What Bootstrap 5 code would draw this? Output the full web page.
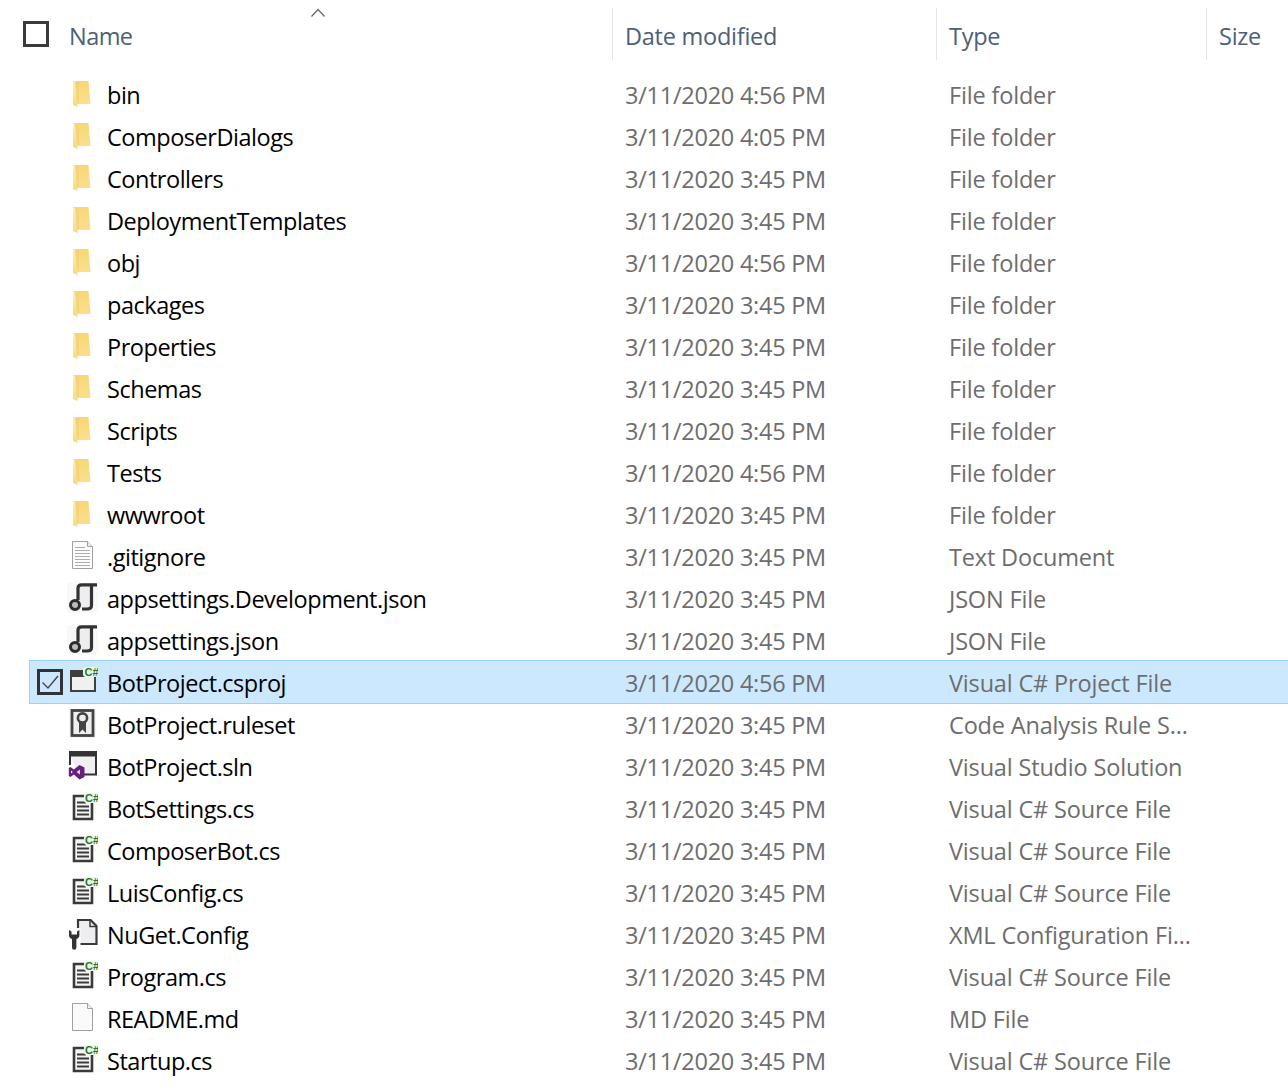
<!DOCTYPE html>
<html lang="en">
<head>
    <meta charset="UTF-8">
    <meta name="viewport" content="width=device-width, initial-scale=1">
    <link href="https://cdn.jsdelivr.net/npm/bootstrap@5.3.3/dist/css/bootstrap.min.css" rel="stylesheet">
    <title>Explorer</title>
    <style>
        body {
            font-family: "Open Sans", "Noto Sans", sans-serif;
            font-size: 23.5px;
            letter-spacing: -0.25px;
            background: #fff;
            overflow: hidden;
        }
        .defs-holder { width: 0; height: 0; display: block; }
        .head-row { height: 74px; position: relative; color: #4c607a; }
        .head-box { width: 26px; height: 26px; border: 3px solid #3a3a3a; margin: 21px 20px 0 23px; }
        .head-cell { height: 52px; margin-top: 8px; padding-top: 6px; display: flex; align-items: center; margin-bottom: 14px; }
        .head-name { width: 543px; letter-spacing: -0.55px; }
        .head-date { width: 324px; border-left: 1px solid #e5e5e5; padding-left: 12px; }
        .head-type { width: 270px; border-left: 1px solid #e5e5e5; padding-left: 12px; }
        .head-size { flex: 1; border-left: 1px solid #e5e5e5; padding-left: 12px; }
        .sort-caret { position: absolute; left: 310px; top: 8px; }
        .file-row { height: 42px; margin-left: 29px; color: #000; }
        .file-row.picked {
            height: 44px;
            margin-top: -2px;
            padding-top: 2px;
            background: #cce8ff;
            border: 1px solid #99d1ff;
            border-right: 0;
        }
        .file-row.picked .name-cell { width: 595px; }
        .picked-box { width: 26px; height: 26px; border: 3px solid #333; margin: -3px 3px 0 7px; }
        .box-gap { width: 37px; flex: none; }
        .name-cell { width: 596px; }
        .name-txt { padding-top: 2px; letter-spacing: -0.47px; }
        .date-cell { width: 324px; color: #6d6d6d; padding-top: 2px; }
        .type-cell { color: #6d6d6d; padding-top: 2px; letter-spacing: -0.17px; }
        .file-ico { width: 32px; height: 32px; flex: none; margin-right: 9px; }
        .badge-txt { font-family: "Liberation Sans", sans-serif; font-weight: 700; font-size: 11px; fill: #1f7a24; letter-spacing: 0; }
    </style>
</head>
<body>
    <svg class="defs-holder" aria-hidden="true">
        <defs>
            <linearGradient id="folderBack" x1="0" y1="0" x2="0" y2="1">
                <stop offset="0" stop-color="#f8d775"/>
                <stop offset="1" stop-color="#fbdf8d"/>
            </linearGradient>
            <linearGradient id="folderFront" x1="0" y1="0" x2="0" y2="1">
                <stop offset="0" stop-color="#fff0b8"/>
                <stop offset="1" stop-color="#f9d97f"/>
            </linearGradient>
            <symbol id="ico-folder" viewBox="0 0 32 32">
                <path d="M7 2H22.500L24.500 25H11z" fill="url(#folderBack)"/>
                <path d="M7 2L11.500 4.500V28L7 26z" fill="url(#folderFront)"/>
                <path d="M9 3L13 3V24H11z" fill="#f6d27a"/>
            </symbol>
            <symbol id="ico-text" viewBox="0 0 32 32">
                <path d="M6.500 .5H21.500L26.500 5.500V27.500H6.500z" fill="#fdfdfd" stroke="#a0a0a0"/>
                <path d="M21.500 .5V5.500H26.500" fill="#eee" stroke="#a0a0a0"/>
                <path d="M9 6.500H19M9 9.500H24M9 12.500H24M9 15.500H24M9 18.500H24M9 21.500H24M9 24.500H24" stroke="#adadad"/>
            </symbol>
            <symbol id="ico-json" viewBox="0 0 32 32">
                <rect x="1" y="0" width="31" height="30" rx="4" fill="#f8f8f8"/>
                <path d="M13 3H25V24L18 26H13z" fill="#eeeef0"/>
                <path d="M12 17V5Q12 1.800 15.500 1.800H31" fill="none" stroke="#333" stroke-width="3.200"/>
                <path d="M25.500 2V22.500Q25.500 26 21 26H16" fill="none" stroke="#333" stroke-width="3.200"/>
                <circle cx="9" cy="22" r="4.500" fill="#bbb" stroke="#2c2c2c" stroke-width="3"/>
            </symbol>
            <symbol id="ico-proj" viewBox="0 0 32 32">
                <rect x="5" y="4" width="24" height="20" fill="#f0f0f0" stroke="#3f3f3f" stroke-width="2"/>
                <rect x="5" y="4" width="24" height="6" fill="#3f3f3f"/>
                <rect x="17" y="0" width="15" height="10" rx="3" fill="#eef6ee"/>
                <text class="badge-txt" x="18.500" y="8.500">C#</text>
            </symbol>
            <symbol id="ico-rule" viewBox="0 0 32 32">
                <rect x="3" y="0" width="27" height="29" fill="#f5f5f5"/>
                <rect x="6" y="1.500" width="21" height="25" fill="#efeff1" stroke="#444" stroke-width="2.800"/>
                <path d="M13 13V24L16.500 20.500L20 24V13z" fill="#444"/>
                <circle cx="16.500" cy="9" r="4.600" fill="#efeff1" stroke="#444" stroke-width="2.600"/>
            </symbol>
            <symbol id="ico-sln" viewBox="0 0 32 32">
                <path d="M4 5H30V23H13z" fill="#f0f0f2"/>
                <rect x="3" y="0" width="28" height="5.500" fill="#333"/>
                <path d="M30 5V23.500H15M4 5V14" fill="none" stroke="#333" stroke-width="2"/>
                <path d="M13.500 14L18.500 16.500V26L13.500 28.500L7.800 23.500L4.500 26L2.800 25V17L4.500 16L7.800 18.500zM13.800 18.500L10.800 21L13.800 23.500zM5 19.500V22.500L6.800 21z" fill="#68217a" fill-rule="evenodd"/>
            </symbol>
            <symbol id="ico-cs" viewBox="0 0 32 32">
                <path d="M8 3H21L26 8V26H8z" fill="#f4f4f4" stroke="#3a3a3a" stroke-width="2.600"/>
                <path d="M11 9.500H20M11 13.500H23M11 17.500H23M11 21.500H23" stroke="#3a3a3a" stroke-width="2.200"/>
                <rect x="18" y="0" width="14" height="10" rx="3" fill="#f0f6f0"/>
                <text class="badge-txt" x="19" y="8.500">C#</text>
            </symbol>
            <symbol id="ico-config" viewBox="0 0 32 32">
                <path d="M12 1H24.500L30.500 7V25H12z" fill="#eeeef0" stroke="#3a3a3a" stroke-width="2.200"/>
                <path d="M24 1V7.500H30.500" fill="none" stroke="#3a3a3a" stroke-width="1.500"/>
                <rect x="1.500" y="9" width="13" height="23" rx="2" fill="#fff"/>
                <path d="M3 11V16Q3 19 6 20V28.500A2.200 2.200 0 0 0 10.400 28.500V20Q13.400 19 13.400 16V11L11 12.500V15.500H5.500V12.500z" fill="#333"/>
            </symbol>
            <symbol id="ico-blank" viewBox="0 0 32 32">
                <path d="M6.500 .5H21.500L26.500 5.500V27.500H6.500z" fill="#fafafa" stroke="#a0a0a0"/>
                <path d="M21.500 .5V5.500H26.500" fill="#eee" stroke="#a0a0a0"/>
            </symbol>
        </defs>
    </svg>

    <div class="container-fluid p-0">
        <div class="head-row d-flex">
            <div class="head-box flex-shrink-0"></div>
            <div class="head-cell head-name">Name</div>
            <div class="head-cell head-date">Date modified</div>
            <div class="head-cell head-type">Type</div>
            <div class="head-cell head-size">Size</div>
            <svg class="sort-caret" width="16" height="10" viewBox="0 0 16 10"><path d="M1.500 8.500L8 1.500L14.500 8.500" fill="none" stroke="#666" stroke-width="1.200"/></svg>
        </div>
        <div id="rows"></div>
    </div>

    <script src="https://cdn.jsdelivr.net/npm/bootstrap@5.3.3/dist/js/bootstrap.bundle.min.js"></script>
    <script>
        const files = [
            ['bin', '3/11/2020 4:56 PM', 'File folder', 'folder'],
            ['ComposerDialogs', '3/11/2020 4:05 PM', 'File folder', 'folder'],
            ['Controllers', '3/11/2020 3:45 PM', 'File folder', 'folder'],
            ['DeploymentTemplates', '3/11/2020 3:45 PM', 'File folder', 'folder'],
            ['obj', '3/11/2020 4:56 PM', 'File folder', 'folder'],
            ['packages', '3/11/2020 3:45 PM', 'File folder', 'folder'],
            ['Properties', '3/11/2020 3:45 PM', 'File folder', 'folder'],
            ['Schemas', '3/11/2020 3:45 PM', 'File folder', 'folder'],
            ['Scripts', '3/11/2020 3:45 PM', 'File folder', 'folder'],
            ['Tests', '3/11/2020 4:56 PM', 'File folder', 'folder'],
            ['wwwroot', '3/11/2020 3:45 PM', 'File folder', 'folder'],
            ['.gitignore', '3/11/2020 3:45 PM', 'Text Document', 'text'],
            ['appsettings.Development.json', '3/11/2020 3:45 PM', 'JSON File', 'json'],
            ['appsettings.json', '3/11/2020 3:45 PM', 'JSON File', 'json'],
            ['BotProject.csproj', '3/11/2020 4:56 PM', 'Visual C# Project File', 'proj', true],
            ['BotProject.ruleset', '3/11/2020 3:45 PM', 'Code Analysis Rule S...', 'rule'],
            ['BotProject.sln', '3/11/2020 3:45 PM', 'Visual Studio Solution', 'sln'],
            ['BotSettings.cs', '3/11/2020 3:45 PM', 'Visual C# Source File', 'cs'],
            ['ComposerBot.cs', '3/11/2020 3:45 PM', 'Visual C# Source File', 'cs'],
            ['LuisConfig.cs', '3/11/2020 3:45 PM', 'Visual C# Source File', 'cs'],
            ['NuGet.Config', '3/11/2020 3:45 PM', 'XML Configuration Fi...', 'config'],
            ['Program.cs', '3/11/2020 3:45 PM', 'Visual C# Source File', 'cs'],
            ['README.md', '3/11/2020 3:45 PM', 'MD File', 'blank'],
            ['Startup.cs', '3/11/2020 3:45 PM', 'Visual C# Source File', 'cs']
        ];

        const tick = '<svg width="20" height="20" viewBox="0 0 20 20"><path d="M2.500 10.500L8 16L18 4" fill="none" stroke="#444" stroke-width="1.400"/></svg>';

        document.getElementById('rows').innerHTML = files.map(f => {
            const check = f[4]
                ? `<span class="picked-box d-flex align-items-center justify-content-center flex-shrink-0">${tick}</span>`
                : '<span class="box-gap"></span>';
            return `<div class="file-row d-flex align-items-center${f[4] ? ' picked' : ''}">
                <div class="name-cell d-flex align-items-center">${check}<svg class="file-ico"><use href="#ico-${f[3]}"/></svg><span class="name-txt">${f[0]}</span></div>
                <div class="date-cell">${f[1]}</div>
                <div class="type-cell">${f[2]}</div>
            </div>`;
        }).join('');
    </script>
</body>
</html>
